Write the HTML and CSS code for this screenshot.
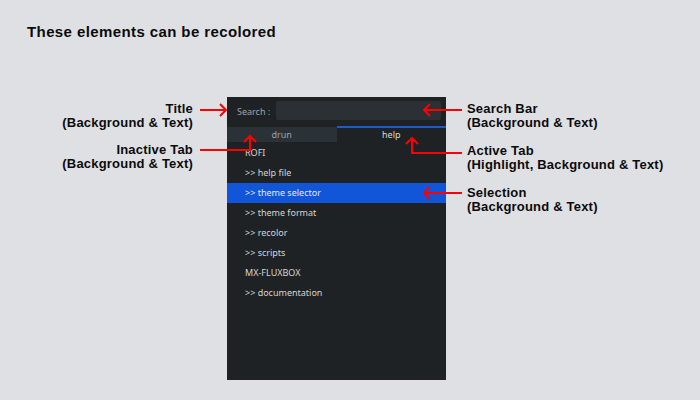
FILE: index.html
```html
<!DOCTYPE html>
<html>
<head>
<meta charset="utf-8">
<link rel="stylesheet" href="styles.css">
</head>
<body>
<div class="page">
  <h1 class="heading">These elements can be recolored</h1>
  <div class="stage">
    <div class="labels labels-left">
      <div class="label">Title<br>(Background &amp; Text)</div>
      <div class="label">Inactive Tab<br>(Background &amp; Text)</div>
    </div>
    <div class="panel">
      <div class="search-row">
        <span class="prompt">Search :</span>
        <div class="search-input"></div>
      </div>
      <div class="tabs">
        <div class="tab tab-inactive">drun</div>
        <div class="tab tab-active">help</div>
      </div>
      <ul class="list">
        <li class="item">ROFI</li>
        <li class="item">&gt;&gt; help file</li>
        <li class="item item-selected">&gt;&gt; theme selector</li>
        <li class="item">&gt;&gt; theme format</li>
        <li class="item">&gt;&gt; recolor</li>
        <li class="item">&gt;&gt; scripts</li>
        <li class="item">MX-FLUXBOX</li>
        <li class="item">&gt;&gt; documentation</li>
      </ul>
    </div>
    <div class="labels labels-right">
      <div class="label">Search Bar<br>(Background &amp; Text)</div>
      <div class="label">Active Tab<br>(Highlight, Background &amp; Text)</div>
      <div class="label">Selection<br>(Background &amp; Text)</div>
    </div>
  </div>
  <svg class="arrows" width="700" height="400" viewBox="0 0 700 400" fill="none" stroke="#ff0000" stroke-width="2">
    <path d="M200 110 H226 M220 104 L226 110 L220 116"/>
    <path d="M462 110 H424 M430 104 L424 110 L430 116"/>
    <path d="M200 150 H250 V136 M244 142 L250 136 L256 142"/>
    <path d="M462 153 H412 V138 M406 144 L412 138 L418 144"/>
    <path d="M462 193 H424 M430 187 L424 193 L430 199"/>
  </svg>
</div>
</body>
</html>
```

FILE: styles.css
```css
* { box-sizing: border-box; }

html, body {
  margin: 0;
  padding: 0;
}

body {
  background: #dfe0e3;
  font-family: "Liberation Sans", Arial, sans-serif;
  color: #0b0b0b;
}

.page {
  position: relative;
  width: 700px;
  height: 400px;
  overflow: hidden;
}

.heading {
  margin: 0;
  padding: 24px 0 0 27px;
  font-size: 15px;
  line-height: 16px;
  font-weight: bold;
  letter-spacing: 0.4px;
}

.stage {
  display: flex;
  align-items: flex-start;
  margin-top: 57px;
}

.labels {
  display: flex;
  flex-direction: column;
  padding-top: 5px;
}

.labels-left {
  width: 193px;
  text-align: right;
  gap: 13px;
}

.labels-right {
  margin-left: 21px;
  gap: 14px;
}

.label {
  font-size: 13px;
  line-height: 14px;
  font-weight: bold;
  letter-spacing: 0.2px;
  white-space: nowrap;
}

.panel {
  width: 219px;
  height: 283px;
  margin-left: 34px;
  background: #1e2224;
  font-family: "Noto Sans", "Open Sans", sans-serif;
  font-size: 9px;
  color: #d4d5d6;
}

.search-row {
  display: flex;
  align-items: center;
  padding: 4px 5px 0 10px;
}

.prompt {
  color: #a0a4a7;
  margin-right: 6px;
  padding-top: 2px;
}

.search-input {
  flex: 1;
  height: 19px;
  background: #2a3034;
  border-radius: 2px;
}

.tabs {
  display: flex;
  margin-top: 6px;
  height: 16px;
}

.tab {
  flex: 1;
  text-align: center;
  line-height: 15px;
}

.tab-inactive {
  margin-top: 1px;
  background: #2b3237;
  color: #9ca1a5;
}

.tab-active {
  border-top: 2px solid #1d5bc9;
  line-height: 13px;
  color: #d8d9da;
}

.list {
  list-style: none;
  margin: 1px 0 0;
  padding: 0;
}

.item {
  height: 20px;
  line-height: 20px;
  padding-left: 18px;
  white-space: nowrap;
}

.item-selected {
  background: #1156d8;
  color: #e2e9f6;
}

.arrows {
  position: absolute;
  left: 0;
  top: 0;
  pointer-events: none;
}
```
